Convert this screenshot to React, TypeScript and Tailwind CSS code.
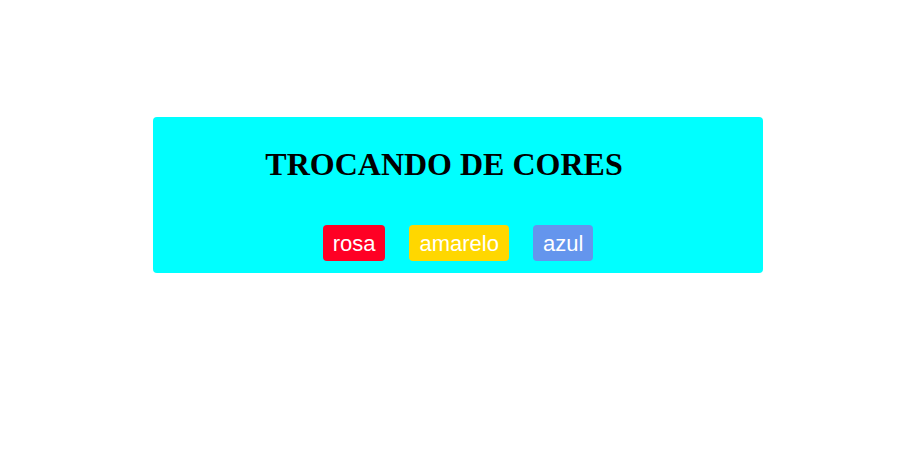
import React from "react";

export default function App() {
  return (
    <div className="w-[905px] h-[449px] bg-white overflow-hidden">
      <div className="ml-[153px] mt-[117px] w-[610px] h-[156px] bg-[#00ffff] rounded-[4px] flex flex-col items-center">
        <h1
          className="mt-[30px] pr-[28px] text-[32px] font-bold text-black leading-[35px]"
          style={{ fontFamily: '"Liberation Serif", serif' }}
        >
          TROCANDO DE CORES
        </h1>
        <div
          className="mt-[43px] flex gap-6 text-[22px] text-white"
          style={{ fontFamily: '"Liberation Sans", Arial, sans-serif' }}
        >
          <button className="h-[36px] px-[10px] rounded-[4px] bg-[#ff0024] flex items-center">rosa</button>
          <button className="h-[36px] px-[10px] rounded-[4px] bg-[#ffd700] flex items-center">amarelo</button>
          <button className="h-[36px] px-[10px] rounded-[4px] bg-[#6495ed] flex items-center">azul</button>
        </div>
      </div>
    </div>
  );
}
